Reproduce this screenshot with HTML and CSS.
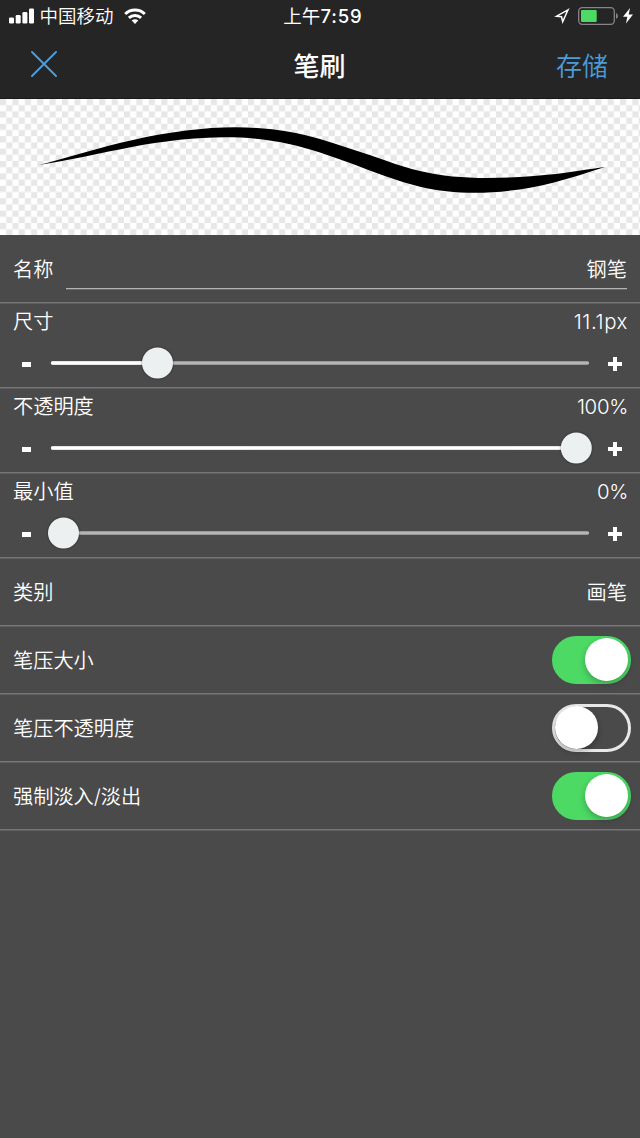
FILE: index.html
```html
<!DOCTYPE html>
<html lang="zh-CN">
<head>
<meta charset="utf-8">
<title>笔刷</title>
<link rel="stylesheet" href="styles.css">
</head>
<body>
<div class="status">
  <div class="status-left">
    <svg class="signal" width="26" height="16" viewBox="0 0 26 16" fill="#fff"><rect x="0" y="9.5" width="5" height="6" rx="1.3"/><rect x="6.7" y="7" width="5" height="8.5" rx="1.3"/><rect x="13.4" y="4" width="5" height="11.5" rx="1.3"/><rect x="20" y="0.5" width="5" height="15" rx="1.3"/></svg>
    <span class="carrier">中国移动</span>
    <svg class="wifi" width="22" height="16" viewBox="0 0 22 16" fill="none" stroke="#fff" stroke-width="3"><path d="M1.200 6C6.700.8 15.300.8 20.800 6"/><path d="M4.900 9.900C8.300 6.800 13.700 6.800 17.100 9.900"/><path d="M11 15.900 7.700 12.600Q11 9.900 14.300 12.600Z" fill="#fff" stroke="none"/></svg>
  </div>
  <span class="time">上午<span class="digits">7:59</span></span>
  <div class="status-right">
    <svg class="locate" width="16" height="16" viewBox="0 0 16 16" fill="none" stroke="#fff" stroke-width="1.500" stroke-linejoin="miter"><path d="M14 1.800 2.500 8.200 7.500 8.800 8.700 13.700Z"/></svg>
    <svg class="battery" width="42" height="18" viewBox="0 0 42 18"><rect x=".7" y=".7" width="35.600" height="16.600" rx="3.500" fill="none" stroke="#858585" stroke-width="1.300"/><rect x="3" y="3" width="15.700" height="12" rx="1" fill="#4cd964"/><path d="M38 6q2 .8 2 3t-2 3z" fill="#858585"/></svg>
    <svg class="bolt" width="10" height="16" viewBox="0 0 10 16" fill="#fff"><path d="M7 0 0 8.800H4.300L3 15.500 10 6.400H5.700Z"/></svg>
  </div>
</div>
<div class="nav">
  <svg class="close" width="28" height="28" viewBox="0 0 28 28" fill="none" stroke="#4b9cd9" stroke-width="2" stroke-linecap="round"><path d="M2 2 26 26M26 2 2 26"/></svg>
  <span class="title">笔刷</span>
  <span class="save">存储</span>
</div>
<svg class="preview" width="640" height="136" viewBox="0 0 640 136">
  <defs><pattern id="checker" width="12.400" height="12.400" patternUnits="userSpaceOnUse"><rect width="6.200" height="6.200" fill="#e7e7e7"/><rect x="6.200" y="6.200" width="6.200" height="6.200" fill="#e7e7e7"/></pattern></defs>
  <rect width="640" height="136" fill="#fff"/>
  <rect width="640" height="136" fill="url(#checker)"/>
  <path d="M39 66C70 58 100 48 133 41C168 33 205 28.300 235 28.300C270 28.300 295 33 320 40C342 46.500 365 54.500 387 62C398 66 409 69.500 420 72C442 77 462 79 487 79C510 79 532 77.500 553 75.300C572 73 590 70 605 68C588 73.500 571 79 553 83.700C530 90 500 93.700 475 93.700C455 93.700 438 92 420 87.700C409 85 398 81.500 387 77.700C365 70 342 60.500 320 53.500C290 44 262 38.300 225 38.300C195 38.300 165 42 133 47.700C100 54 70 61 39 66Z"/>
</svg>
<div class="row name">
  <span>名称</span>
  <div class="field">钢笔</div>
</div>
<div class="row slider">
  <div class="line"><span>尺寸</span><span class="value">11.1px</span></div>
  <div class="control"><i class="minus"></i><svg class="track" width="560" height="40" viewBox="0 0 560 40"><path d="M12.500 20H547.500" class="rail"/><path d="M12.500 20H118" class="fill"/><circle cx="117.500" cy="20" r="15.500" class="thumb"/></svg><i class="plus"></i></div>
</div>
<div class="row slider">
  <div class="line"><span>不透明度</span><span class="value percent">100%</span></div>
  <div class="control"><i class="minus"></i><svg class="track" width="560" height="40" viewBox="0 0 560 40"><path d="M12.500 20H547.500" class="rail"/><path d="M12.500 20H536" class="fill"/><circle cx="536.300" cy="20" r="15.500" class="thumb"/></svg><i class="plus"></i></div>
</div>
<div class="row slider">
  <div class="line"><span>最小值</span><span class="value percent">0%</span></div>
  <div class="control"><i class="minus"></i><svg class="track" width="560" height="40" viewBox="0 0 560 40"><path d="M12.500 20H547.500" class="rail"/><circle cx="23.500" cy="20" r="15.500" class="thumb"/></svg><i class="plus"></i></div>
</div>
<div class="row"><span class="label">类别</span><span class="label">画笔</span></div>
<div class="row toggle"><span class="label">笔压大小</span><div class="switch on"><i></i></div></div>
<div class="row toggle"><span class="label">笔压不透明度</span><div class="switch"><i></i></div></div>
<div class="row toggle"><span class="label">强制淡入/淡出</span><div class="switch on"><i></i></div></div>
</body>
</html>
```
FILE: styles.css
```css
* { box-sizing: border-box; }
body { margin: 0; height: 1138px; overflow: hidden; background: #4a4a4a; color: #fff; font: 350 20.2px/30px Inter, "Noto Sans CJK SC", sans-serif; }
svg { display: block; flex: none; }
.status { height: 32px; display: grid; grid-template-columns: 1fr auto 1fr; align-items: center; background: #252525; padding: 0 7px 0 9px; font-size: 18.500px; font-weight: 400; }
.status-left, .status-right { display: flex; align-items: center; }
.status-right { justify-content: flex-end; }
.carrier { margin-left: 4.500px; font-weight: 350; }
.wifi { margin-left: 10px; }
.time { padding-left: 4px; }
.digits { font-weight: 500; letter-spacing: .9px; }
.battery { margin-left: 8px; }
.bolt { margin-left: 3px; }
.nav { height: 67px; display: grid; grid-template-columns: 1fr auto 1fr; align-items: center; padding: 0 32px 0 30px; background: #252525; font-size: 26px; border-bottom: 1px solid #181818; }
.close { margin-bottom: 2px; }
.title { font-weight: 500; padding: 3px 0 0 1px; }
.save { justify-self: end; color: #4b9cd9; padding-top: 3px; }
.row { height: 68px; display: flex; align-items: center; justify-content: space-between; padding: 0 13px; border-bottom: 1px solid #767676; box-shadow: 0 1px #5e5e5e; }
.label { padding-top: 2px; }
.name { align-items: flex-start; padding-top: 20px; gap: 13px; }
.field { flex: 1; height: 34px; text-align: right; border-bottom: 1px solid #b4b4b4; box-shadow: 0 1px #666; }
.slider { height: 85px; display: block; padding-top: 4px; }
.line { display: flex; justify-content: space-between; }
.value { font-size: 20.400px; letter-spacing: .6px; margin-right: -1px; }
.percent { letter-spacing: -.3px; }
.control { display: flex; align-items: center; height: 40px; margin-top: 6px; }
.minus { width: 9px; height: 5px; background: #fff; margin: 3px 0 0 9px; }
.track { margin-left: 9px; }
.rail { stroke: #b4b4b4; stroke-width: 3.300; stroke-linecap: round; }
.fill { stroke: #fff; stroke-width: 3.300; stroke-linecap: round; }
.thumb { fill: #ecf0f1; filter: drop-shadow(0 .5px 1.200px rgba(0,0,0,.5)); }
.plus { width: 14px; height: 14px; margin: 2px 0 0 8px; background: linear-gradient(#fff, #fff) center / 14px 4px no-repeat, linear-gradient(#fff, #fff) center / 4px 14px no-repeat; }
.toggle { padding-right: 9px; }
.switch { width: 79px; height: 48px; border-radius: 24px; border: 3px solid #e8e8e8; flex: none; }
.switch i { display: block; width: 43px; height: 43px; margin: -.5px 0 0 -.5px; border-radius: 50%; background: #fff; box-shadow: 0 3px 6px rgba(0,0,0,.25); }
.switch.on { background: #4cd964; border-color: #4cd964; }
.switch.on i { margin-left: 30px; }
```
